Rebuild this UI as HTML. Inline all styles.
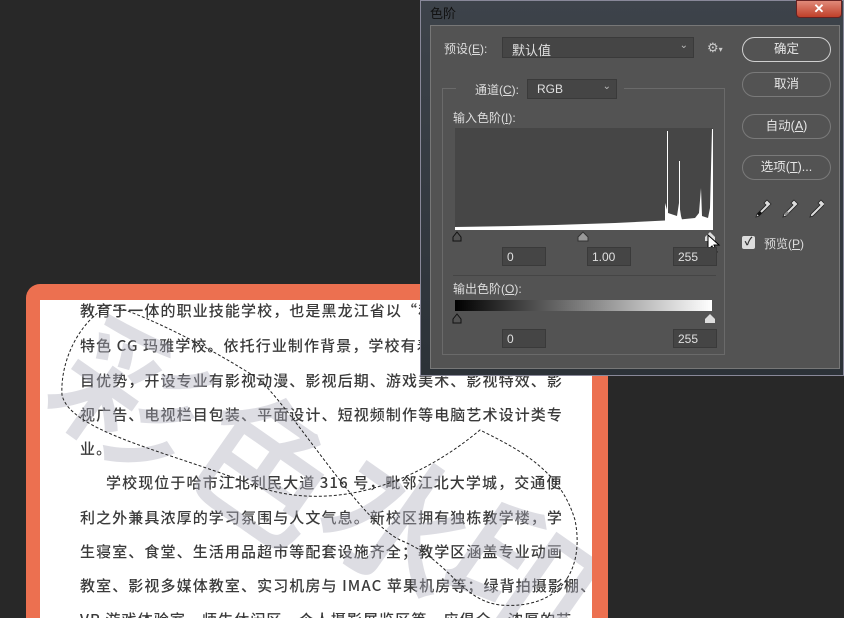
<!DOCTYPE html>
<html style="width:844px;height:618px;overflow:hidden"><head><meta charset="utf-8"><style>
*{margin:0;padding:0;box-sizing:border-box}
body{width:844px;height:618px;background:#282828;position:relative;overflow:hidden;font-family:"Liberation Sans","Noto Sans CJK SC",sans-serif}
.a{position:absolute}
.doc{left:26px;top:284px;width:582px;height:334px;background:#ec7050;border-radius:14px 14px 0 0}
.page{left:40px;top:300px;width:552px;height:318px;background:#fff;overflow:hidden}
.line{position:absolute;left:40px;font-size:15px;color:#3a3a3a;white-space:nowrap;font-family:"Noto Sans CJK SC",sans-serif;font-weight:500;letter-spacing:1.1px}
.wm{position:absolute;width:150px;height:150px;margin:-75px 0 0 -75px;line-height:150px;text-align:center;font-size:145px;color:rgba(175,175,188,.42);font-family:"Noto Sans CJK SC",sans-serif;font-weight:500;transform:rotate(35deg)}
.dlg{left:420px;top:0;width:424px;height:376px;background:linear-gradient(#3d434a,#2c3238);border:1px solid #889}
.in{left:430px;top:25px;width:410px;height:344px;background:#535353;border:1px solid #777}
.t{color:#ddd;font-size:12px;position:absolute;white-space:nowrap}
.box{position:absolute;background:#454545;border:1px solid #3a3a3a;color:#e0e0e0;font-size:12px;padding:2px 4px}
.btn{position:absolute;left:742px;width:89px;height:25px;border:1px solid #9a9a9a;border-radius:13px;color:#e6e6e6;font-size:12.5px;text-align:center;line-height:23px}
</style></head><body>
<div class="a doc"></div>
<div class="a page">
<div class="line" style="top:0px">教育于一体的职业技能学校，也是黑龙江省以“私立</div>
<div class="line" style="top:35px">特色 CG 玛雅学校。依托行业制作背景，学校有着深厚</div>
<div class="line" style="top:70px">目优势，开设专业有影视动漫、影视后期、游戏美术、影视特效、影</div>
<div class="line" style="top:104px">视广告、电视栏目包装、平面设计、短视频制作等电脑艺术设计类专</div>
<div class="line" style="top:138px">业。</div>
<div class="line" style="top:172px;left:66px">学校现位于哈市江北利民大道 316 号，毗邻江北大学城，交通便</div>
<div class="line" style="top:207px">利之外兼具浓厚的学习氛围与人文气息。新校区拥有独栋教学楼，学</div>
<div class="line" style="top:241px">生寝室、食堂、生活用品超市等配套设施齐全；教学区涵盖专业动画</div>
<div class="line" style="top:275px">教室、影视多媒体教室、实习机房与 IMAC 苹果机房等；绿背拍摄影棚、</div>
<div class="line" style="top:309px">VR 游戏体验室、师生休闲区、个人摄影展览区等一应俱全，浓厚的艺</div>
<div class="wm" style="left:95px;top:90px">彩</div>
<div class="wm" style="left:230px;top:160px">色</div>
<div class="wm" style="left:365px;top:215px">水</div>
<div class="wm" style="left:485px;top:270px">印</div>
<svg class="a" style="left:-40px;top:-300px" width="844" height="618"><path d="M110 305 C80 320 60 360 62 395 C70 430 160 450 240 480 C330 520 420 480 480 430 C520 450 560 470 575 520 C585 570 560 610 500 605 C460 600 450 560 400 540 C360 520 300 420 260 380 C230 360 160 320 110 305Z" fill="none" stroke="#222" stroke-width="1" stroke-dasharray="3 2"/></svg>
</div>

<div class="a dlg"></div>
<div class="t" style="left:430px;top:3px;color:#111;font-size:13px">色阶</div>
<div class="a" style="left:796px;top:0;width:46px;height:18px;background:linear-gradient(#e08a7a,#c0402a);border:1px solid #622;border-radius:0 0 4px 4px;color:#fff;text-align:center;font-size:13px;font-weight:bold;line-height:16px">✕</div>
<div class="a in"></div>
<div class="t" style="left:444px;top:40px">预设(<u>E</u>):</div>
<div class="box" style="left:502px;top:37px;width:192px;height:21px;font-size:13px;padding-left:9px">默认值<span style="position:absolute;right:5px;top:2px;color:#bbb;font-size:10px">⌄</span></div>
<div class="t" style="left:707px;top:40px;font-size:13px;color:#ccc">⚙<span style="font-size:8px">▾</span></div>
<div class="btn" style="top:37px;border-color:#d0d0d0">确定</div>
<div class="btn" style="top:72px;border-color:#7a7a7a">取消</div>
<div class="btn" style="top:114px;border-color:#7a7a7a">自动(<u>A</u>)</div>
<div class="btn" style="top:155px;border-color:#7a7a7a">选项(<u>T</u>)...</div>
<div class="a" style="left:442px;top:88px;width:283px;height:267px;border:1px solid #6a6a6a"></div>
<div class="a" style="left:456px;top:80px;width:168px;height:18px;background:#535353"></div>
<div class="t" style="left:475px;top:81px">通道(<u>C</u>):</div>
<div class="box" style="left:527px;top:79px;width:90px;height:20px;padding-left:9px">RGB<span style="position:absolute;right:5px;top:1px;color:#bbb;font-size:10px">⌄</span></div>
<div class="t" style="left:453px;top:109px">输入色阶(<u>I</u>):</div>
<svg class="a" style="left:455px;top:128px" width="258" height="102">
<rect width="258" height="102" fill="#464646"/>
<path d="M0 102 L0 99 L60 98 L100 97 L130 96 L160 95 L200 93 L220 92 L240 90 L244 85 L246 60 L247 88 L253 90 L255 80 L257 1 L258 1 L258 102Z" fill="#fff"/>
<rect x="212" y="3" width="1" height="99" fill="#fff"/>
<rect x="224" y="33" width="1" height="69" fill="#fff"/>
<path d="M210 102 L210 75 L213 85 L222 88 L224 75 L226 88 L230 102Z" fill="#fff"/>
</svg>
<svg class="a" style="left:450px;top:229px" width="270" height="14">
<path d="M3 12 L3 8 L7 3 L11 8 L11 12Z" fill="none" stroke="#111"/>
<path d="M128 12 L128 8 L133 3 L138 8 L138 12Z" fill="#999" stroke="#333"/>
<path d="M255 12 L255 8 L260 3 L265 8 L265 12Z" fill="#ddd"/>
</svg>
<svg class="a" style="left:707px;top:234px" width="14" height="22"><path d="M1 1 L1 16 L5 12 L8 19 L10 18 L7 11 L12 11Z" fill="#fff" stroke="#000"/></svg>
<div class="box" style="left:502px;top:247px;width:44px;height:19px">0</div>
<div class="box" style="left:587px;top:247px;width:44px;height:19px">1.00</div>
<div class="box" style="left:673px;top:247px;width:44px;height:19px">255</div>
<div class="a" style="left:453px;top:275px;width:263px;height:1px;background:#454545"></div>
<div class="t" style="left:453px;top:280px">输出色阶(<u>O</u>):</div>
<div class="a" style="left:455px;top:300px;width:257px;height:11px;background:linear-gradient(90deg,#000,#fff)"></div>
<svg class="a" style="left:450px;top:311px" width="270" height="14">
<path d="M3 12 L3 8 L7 3 L11 8 L11 12Z" fill="none" stroke="#111"/>
<path d="M255 12 L255 8 L260 3 L265 8 L265 12Z" fill="#ddd"/>
</svg>
<div class="box" style="left:502px;top:329px;width:44px;height:19px">0</div>
<div class="box" style="left:673px;top:329px;width:44px;height:19px">255</div>
<svg class="a" style="left:752px;top:198px" width="72" height="22">
<g fill="#ddd" stroke="#222" stroke-width=".8">
<path d="M15 2 L19 6 L16 9 L7 18 L4 19 L5 16 L14 7 L12 5Z"/>
<path d="M42 2 L46 6 L43 9 L34 18 L31 19 L32 16 L41 7 L39 5Z"/>
<path d="M69 2 L73 6 L70 9 L61 18 L58 19 L59 16 L68 7 L66 5Z"/>
</g>
<path d="M5 16 L8 13 L10 15 L7 18Z" fill="#111"/>
<path d="M32 16 L35 13 L37 15 L34 18Z" fill="#888"/>
</svg>
<div class="a" style="left:742px;top:236px;width:13px;height:13px;background:#ddd;border-radius:2px;color:#333;font-size:11px;line-height:13px;text-align:center;font-weight:bold">✓</div>
<div class="t" style="left:764px;top:235px">预览(<u>P</u>)</div>
</body></html>
